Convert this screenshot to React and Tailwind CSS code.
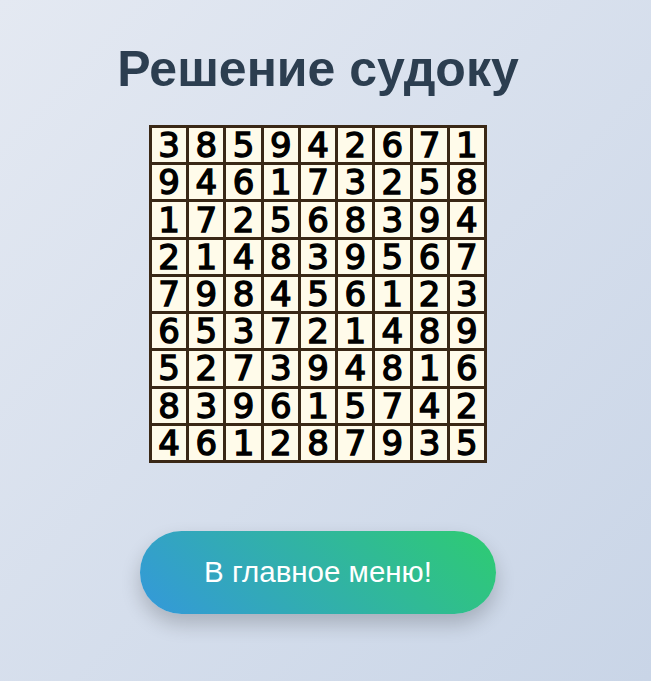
import React from "react";

const grid = [
  "385942671",
  "946173258",
  "172568394",
  "214839567",
  "798456123",
  "653721489",
  "527394816",
  "839615742",
  "461287935",
];

export default function App() {
  return (
    <div className="min-h-[681px] w-full bg-gradient-to-br from-[#e4e9f2] to-[#c9d5e7]">
      <div className="w-[636px] flex flex-col items-center pt-[39px]">
        <h1
          className="text-[50px] leading-[60px] font-bold text-[#2c3e50]"
          style={{ fontFamily: '"Liberation Sans", Arial, sans-serif' }}
        >
          Решение судоку
        </h1>
        <div className="mt-[26px] w-[338px] h-[338px] bg-[#3a2816] p-[3px] grid grid-cols-9 grid-rows-9 gap-[3px]">
          {grid.flatMap((row, r) =>
            row.split("").map((d, c) => (
              <div
                key={`${r}-${c}`}
                className="bg-[#fffbea] flex items-center justify-center text-[34px] font-normal text-black leading-none [-webkit-text-stroke:1.4px_black]"
                style={{ fontFamily: '"DejaVu Sans", sans-serif' }}
              >
                {d}
              </div>
            ))
          )}
        </div>
        <button
          className="mt-[68px] w-[356px] h-[83px] rounded-full bg-[linear-gradient(45deg,#3498db,#2ecc71)] text-white text-[29.5px] shadow-[0_10px_20px_rgba(0,0,0,0.2)]"
          style={{ fontFamily: '"Liberation Sans", Arial, sans-serif' }}
        >
          В главное меню!
        </button>
      </div>
    </div>
  );
}
